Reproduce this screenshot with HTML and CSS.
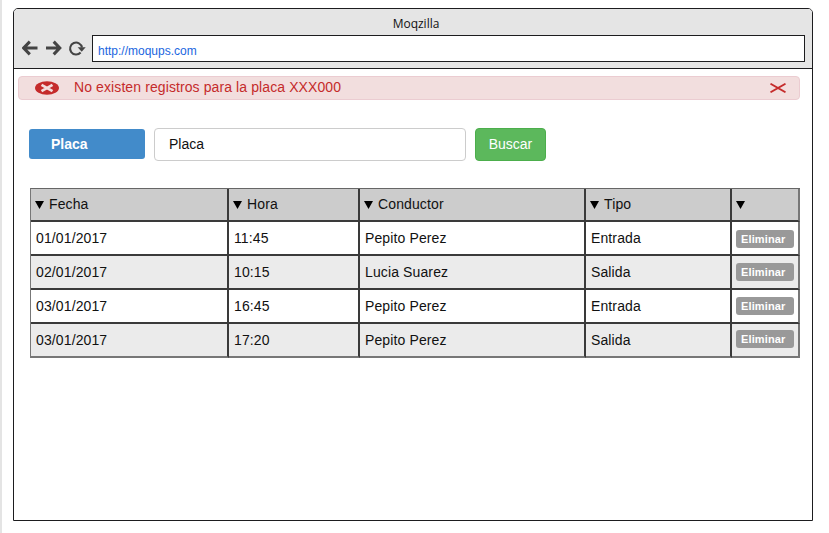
FILE: index.html
```html
<!DOCTYPE html>
<html lang="es">
<head>
<meta charset="utf-8">
<title>Moqzilla</title>
<link rel="stylesheet" href="styles.css">
</head>
<body>
<main class="window">
  <header class="chrome">
    <div class="title">Moqzilla</div>
    <div class="toolbar">
      <svg class="nav" width="66" height="18" viewBox="0 0 66 18" fill="none" stroke="#444" stroke-width="3">
        <path d="M2 9H15.500M7.800 2.600L1.700 9l6.100 6.400"/>
        <path d="M24 9H37.500M31.700 2.600L37.800 9 31.700 15.400"/>
        <path d="M58.600 13.500A6 6 0 1 1 60 8.500" stroke-width="2"/>
        <path d="M55.700 8.200h8l-4 4.600z" fill="#444" stroke="none"/>
      </svg>
      <div class="address">http://moqups.com</div>
    </div>
  </header>
  <section class="alert">
    <svg class="alert-icon" width="24" height="14" viewBox="0 0 24 14">
      <ellipse cx="12" cy="7" rx="12" ry="6.700" fill="#c52b2b"/>
      <path d="M6.500 3.900L17.500 10.100M17.500 3.900L6.500 10.100" stroke="#f2dede" stroke-width="2.800"/>
    </svg>
    <span class="alert-text">No existen registros para la placa XXX000</span>
    <svg class="close" width="16" height="10" viewBox="0 0 16 10" stroke="#c52b2b" stroke-width="1.800">
      <path d="M.5 .7L15.500 9.300M15.500 .7L.5 9.300"/>
    </svg>
  </section>
  <section class="search">
    <div class="label">Placa</div>
    <div class="field">Placa</div>
    <div class="submit">Buscar</div>
  </section>
  <section class="table">
    <div class="row head">
      <div><i></i>Fecha</div><div><i></i>Hora</div><div><i></i>Conductor</div><div><i></i>Tipo</div><div><i></i></div>
    </div>
    <div class="row"><div>01/01/2017</div><div>11:45</div><div>Pepito Perez</div><div>Entrada</div><div><b class="remove first">Eliminar</b></div></div>
    <div class="row alt"><div>02/01/2017</div><div>10:15</div><div>Lucia Suarez</div><div>Salida</div><div><b class="remove">Eliminar</b></div></div>
    <div class="row"><div>03/01/2017</div><div>16:45</div><div>Pepito Perez</div><div>Entrada</div><div><b class="remove">Eliminar</b></div></div>
    <div class="row alt last"><div>03/01/2017</div><div>17:20</div><div>Pepito Perez</div><div>Salida</div><div><b class="remove">Eliminar</b></div></div>
  </section>
</main>
</body>
</html>
```
FILE: styles.css
```css
* { box-sizing: border-box; }
body {
  margin: 0;
  height: 533px;
  padding: 8px 0 0 11px;
  border-left: 2px solid #e4e4e4;
  background: #fff;
  font-family: "Liberation Sans", Arial, sans-serif;
  font-size: 14px;
  color: #111;
  overflow: hidden;
}
.window {
  width: 800px;
  height: 513px;
  border: 1px solid #1d1d1f;
  border-radius: 5px 5px 0 0;
  background: #fff;
}
.chrome {
  height: 60px;
  border-bottom: 1px solid #1d1d1f;
  border-radius: 4px 4px 0 0;
  background: #e5e5e5;
}
.title {
  height: 26px;
  padding: 2px 0 0 6px;
  text-align: center;
  font-family: "Open Sans", sans-serif;
  font-size: 12px;
  line-height: 26px;
}
.toolbar { display: flex; }
.nav { margin: 4px 4px 0 8px; flex: none; }
.address {
  width: 713px;
  height: 27px;
  padding: 3px 5px 0;
  border: 1px solid #1d1d1f;
  background: #fff;
  color: #1a66e0;
  font-size: 12px;
  line-height: 25px;
}
.alert {
  display: flex;
  align-items: center;
  width: 782px;
  height: 24px;
  margin: 7px 0 0 4px;
  padding: 0 13px 1px 16px;
  border: 1px solid #ebccd1;
  border-radius: 4px;
  background: #f2dede;
  color: #c52b2b;
}
.alert-text { margin-left: 15px; flex: 1; line-height: 19px; letter-spacing: .1px; }
.search {
  display: flex;
  align-items: center;
  height: 33px;
  margin: 28px 0 0 15px;
  line-height: 31px;
}
.label {
  width: 116px;
  height: 30px;
  margin-bottom: 1px;
  padding-left: 22px;
  border-radius: 3px;
  background: #428bca;
  color: #fff;
  font-weight: bold;
  line-height: 30px;
}
.field {
  width: 312px;
  height: 33px;
  margin: 0 9px;
  padding-left: 14px;
  border: 1px solid #ccc;
  border-radius: 4px;
}
.submit {
  width: 71px;
  height: 33px;
  border: 1px solid #4cae4c;
  border-radius: 4px;
  background: #5cb85c;
  color: #fff;
  text-align: center;
}
.table {
  width: 770px;
  margin: 27px 0 0 16px;
  border-top: 1px solid #666;
  border-left: 1px solid #777;
  letter-spacing: .12px;
}
.row {
  display: grid;
  grid-template-columns: 198px 131px 226px 146px 68px;
  height: 34px;
  line-height: 32px;
}
.row > div {
  padding-left: 5px;
  border-right: 2px solid #3a3a3a;
  border-bottom: 2px solid #3a3a3a;
  white-space: nowrap;
}
.row > div:last-child { padding-left: 4px; border-right-color: #777; }
.alt > div { background: #ebebeb; }
.last > div { border-bottom-color: #777; }
.head { height: 33px; line-height: 30px; }
.head > div { padding-left: 4px; background: #ccc; }
.head i {
  display: inline-block;
  width: 9px;
  height: 8px;
  margin-right: 5px;
  background: #000;
  clip-path: polygon(0 0, 100% 0, 50% 100%);
}
.remove {
  display: block;
  width: 58px;
  height: 18px;
  margin-top: 7px;
  padding-left: 5px;
  border-radius: 3px;
  background: #999;
  color: #fff;
  font-size: 11px;
  line-height: 18px;
}
.first { margin-top: 8px; }
.last .remove { margin-top: 6px; }
```
